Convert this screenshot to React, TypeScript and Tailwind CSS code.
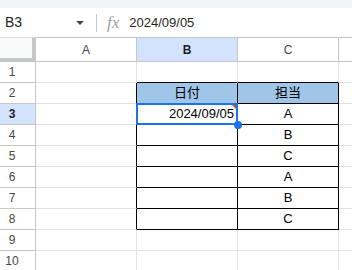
import React from 'react';

const cols = ['A', 'B', 'C', 'D'];
const rowNums = [1, 2, 3, 4, 5, 6, 7, 8, 9, 10];
const tanto = ['A', 'B', 'C', 'A', 'B', 'C'];

function Cell({ row, col }: { row: number; col: string }) {
    const inTable = row >= 2 && row <= 8 && (col === 'B' || col === 'C');
    const leftOfTable = col === 'A' && row >= 2 && row <= 8;
    const aboveTable = row === 1 && (col === 'B' || col === 'C');
    const selected = row === 3 && col === 'B';

    let border = 'border-r border-b border-[#e1e1e1]';
    if (inTable) border = 'border-r border-b border-black';
    else if (leftOfTable) border = 'border-r border-r-black border-b border-b-[#e1e1e1]';
    else if (aboveTable) border = 'border-r border-r-[#e1e1e1] border-b border-b-black';
    if (col === 'D') border = 'border-b border-[#e1e1e1]';

    let bg = 'bg-white';
    if (inTable && row === 2) bg = 'bg-[#9fc5e8]';

    let content: React.ReactNode = null;
    let align = 'justify-center';
    if (row === 2 && col === 'B') content = '日付';
    if (row === 2 && col === 'C') content = '担当';
    if (row === 3 && col === 'B') {
        content = '2024/09/05';
        align = 'justify-end pr-[3px]';
    }
    if (col === 'C' && row >= 3 && row <= 8) content = tanto[row - 3];

    return (
        <div className={`relative flex items-center ${align} ${border} ${bg} text-[13px] text-black`}>
            {content}
            {selected && (
                <>
                    <div className="absolute -left-px -top-px -right-px -bottom-px border-2 border-[#1a73e8] pointer-events-none" />
                    <div className="absolute top-px right-px w-0 h-0 border-t-[4px] border-t-[#ea4335] border-l-[4px] border-l-transparent" />
                    <div className="absolute -right-[5px] -bottom-[5px] w-[8px] h-[8px] rounded-full bg-[#1a73e8] z-10" />
                </>
            )}
        </div>
    );
}

export default function App() {
    return (
        <div className="w-[352px] h-[270px] overflow-hidden bg-white flex flex-col" style={{ fontFamily: '"Liberation Sans", Arial, "Noto Sans CJK JP", sans-serif' }}>
            {/* top strip */}
            <div className="h-[8px] bg-[#f0f4f9] shrink-0" />

            {/* formula bar */}
            <div className="h-[29px] shrink-0 flex items-center bg-white">
                <div className="w-[96px] flex items-center pl-[5px] pr-[12px]">
                    <span className="flex-1 text-[14px] text-[#1f1f1f]">B3</span>
                    <span className="w-0 h-0 border-l-[4px] border-r-[4px] border-t-[4px] border-l-transparent border-r-transparent border-t-[#444746]" />
                </div>
                <div className="w-px h-[18px] bg-[#c4c7c5]" />
                <span className="ml-[10px] text-[17px] italic text-[#9aa0a6] leading-none" style={{ fontFamily: '"Liberation Serif", serif' }}>
                    fx
                </span>
                <span className="ml-[10px] text-[13px] text-[#1f1f1f]">2024/09/05</span>
            </div>

            {/* grid */}
            <div className="grid grid-cols-[36px_101px_101px_101px_1fr] grid-rows-[25px_repeat(10,21px)] shrink-0">
                {/* corner */}
                <div className="bg-[#f8f9fa] border-t border-t-[#e1e1e1] border-r-[4px] border-b-[4px] border-r-[#c4c7c5] border-b-[#c4c7c5]" />
                {cols.map(c => (
                    <div
                        key={c}
                        className={`flex items-center justify-center text-[12px] border-t border-b border-[#c4c7c5] ${c !== 'D' ? 'border-r' : ''} ${
                            c === 'B' ? 'bg-[#d3e3fd] text-[#1f1f1f] font-bold' : 'bg-white text-[#444746]'
                        }`}
                    >
                        {c !== 'D' ? c : ''}
                    </div>
                ))}
                {rowNums.map(r => (
                    <React.Fragment key={r}>
                        <div
                            className={`flex items-center justify-center pr-[11px] text-[12px] border-r border-b border-[#c4c7c5] ${
                                r === 3 ? 'bg-[#d3e3fd] text-[#1f1f1f] font-bold' : 'bg-white text-[#444746]'
                            }`}
                        >
                            {r}
                        </div>
                        {cols.map(c => (
                            <Cell key={c} row={r} col={c} />
                        ))}
                    </React.Fragment>
                ))}
            </div>
        </div>
    );
}
